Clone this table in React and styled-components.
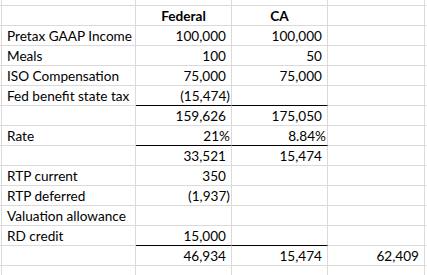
import React from "react";
import styled, { createGlobalStyle } from "styled-components";

const Global = createGlobalStyle`
  html, body { margin: 0; padding: 0; background: #fff; }
  body { width: 427px; height: 275px; overflow: hidden; }
`;

const Sheet = styled.div`
  display: grid;
  grid-template-columns: 2px 134px 96px 96px 97px 1fr;
  grid-template-rows: 6px repeat(13, 20px) 10px;
  width: 427px;
  height: 275px;
  font-family: Lato, "Liberation Sans", sans-serif;
  font-size: 13.6px;
  color: #000;
`;

const Cell = styled.div`
  box-sizing: border-box;
  border-right: 1px solid ${(p) => (p.$last ? "transparent" : "#dadada")};
  border-bottom: 1px solid ${(p) => (p.$rule ? "#000" : "#dadada")};
  display: flex;
  align-items: flex-end;
  justify-content: ${(p) =>
    p.$align === "right" ? "flex-end" : p.$align === "center" ? "center" : "flex-start"};
  padding: 0 ${(p) => (p.$align === "right" ? p.$pr ?? 5 : 0)}px 2px
    ${(p) => (p.$align === "left" ? 5 : 0)}px;
  font-weight: ${(p) => (p.$bold ? 700 : 400)};
  line-height: 14px;
  white-space: nowrap;
  overflow: visible;
`;

const rows = [
  { a: "", b: "", c: "", d: "", partial: true },
  { a: "", b: "Federal", c: "CA", d: "", header: true },
  { a: "Pretax GAAP Income", b: "100,000", c: "100,000" },
  { a: "Meals", b: "100", c: "50" },
  { a: "ISO Compensation", b: "75,000", c: "75,000" },
  { a: "Fed benefit state tax", b: "(15,474)", c: "", rule: true },
  { a: "", b: "159,626", c: "175,050" },
  { a: "Rate", b: "21%", c: "8.84%", rule: true },
  { a: "", b: "33,521", c: "15,474" },
  { a: "RTP current", b: "350", c: "" },
  { a: "RTP deferred", b: "(1,937)", c: "" },
  { a: "Valuation allowance", b: "", c: "" },
  { a: "RD credit", b: "15,000", c: "", rule: true },
  { a: "", b: "46,934", c: "15,474", d: "62,409" },
  { a: "", b: "", c: "", d: "", partial: true },
];

const padFor = (v) => (v.endsWith(")") || v.endsWith("%") ? 1 : 5);

export default function App() {
  return (
    <>
      <Global />
      <Sheet>
        {rows.map((r, i) => {
          const numAlign = r.header ? "center" : "right";
          return (
            <React.Fragment key={i}>
              <Cell />
              <Cell $align="left">{r.a}</Cell>
              <Cell $align={numAlign} $bold={r.header} $rule={r.rule} $pr={padFor(r.b)}>
                {r.b}
              </Cell>
              <Cell $align={numAlign} $bold={r.header} $rule={r.rule} $pr={padFor(r.c)}>
                {r.c}
              </Cell>
              <Cell $align="right" $pr={padFor(r.d || "")}>
                {r.d}
              </Cell>
              <Cell $last />
            </React.Fragment>
          );
        })}
      </Sheet>
    </>
  );
}
